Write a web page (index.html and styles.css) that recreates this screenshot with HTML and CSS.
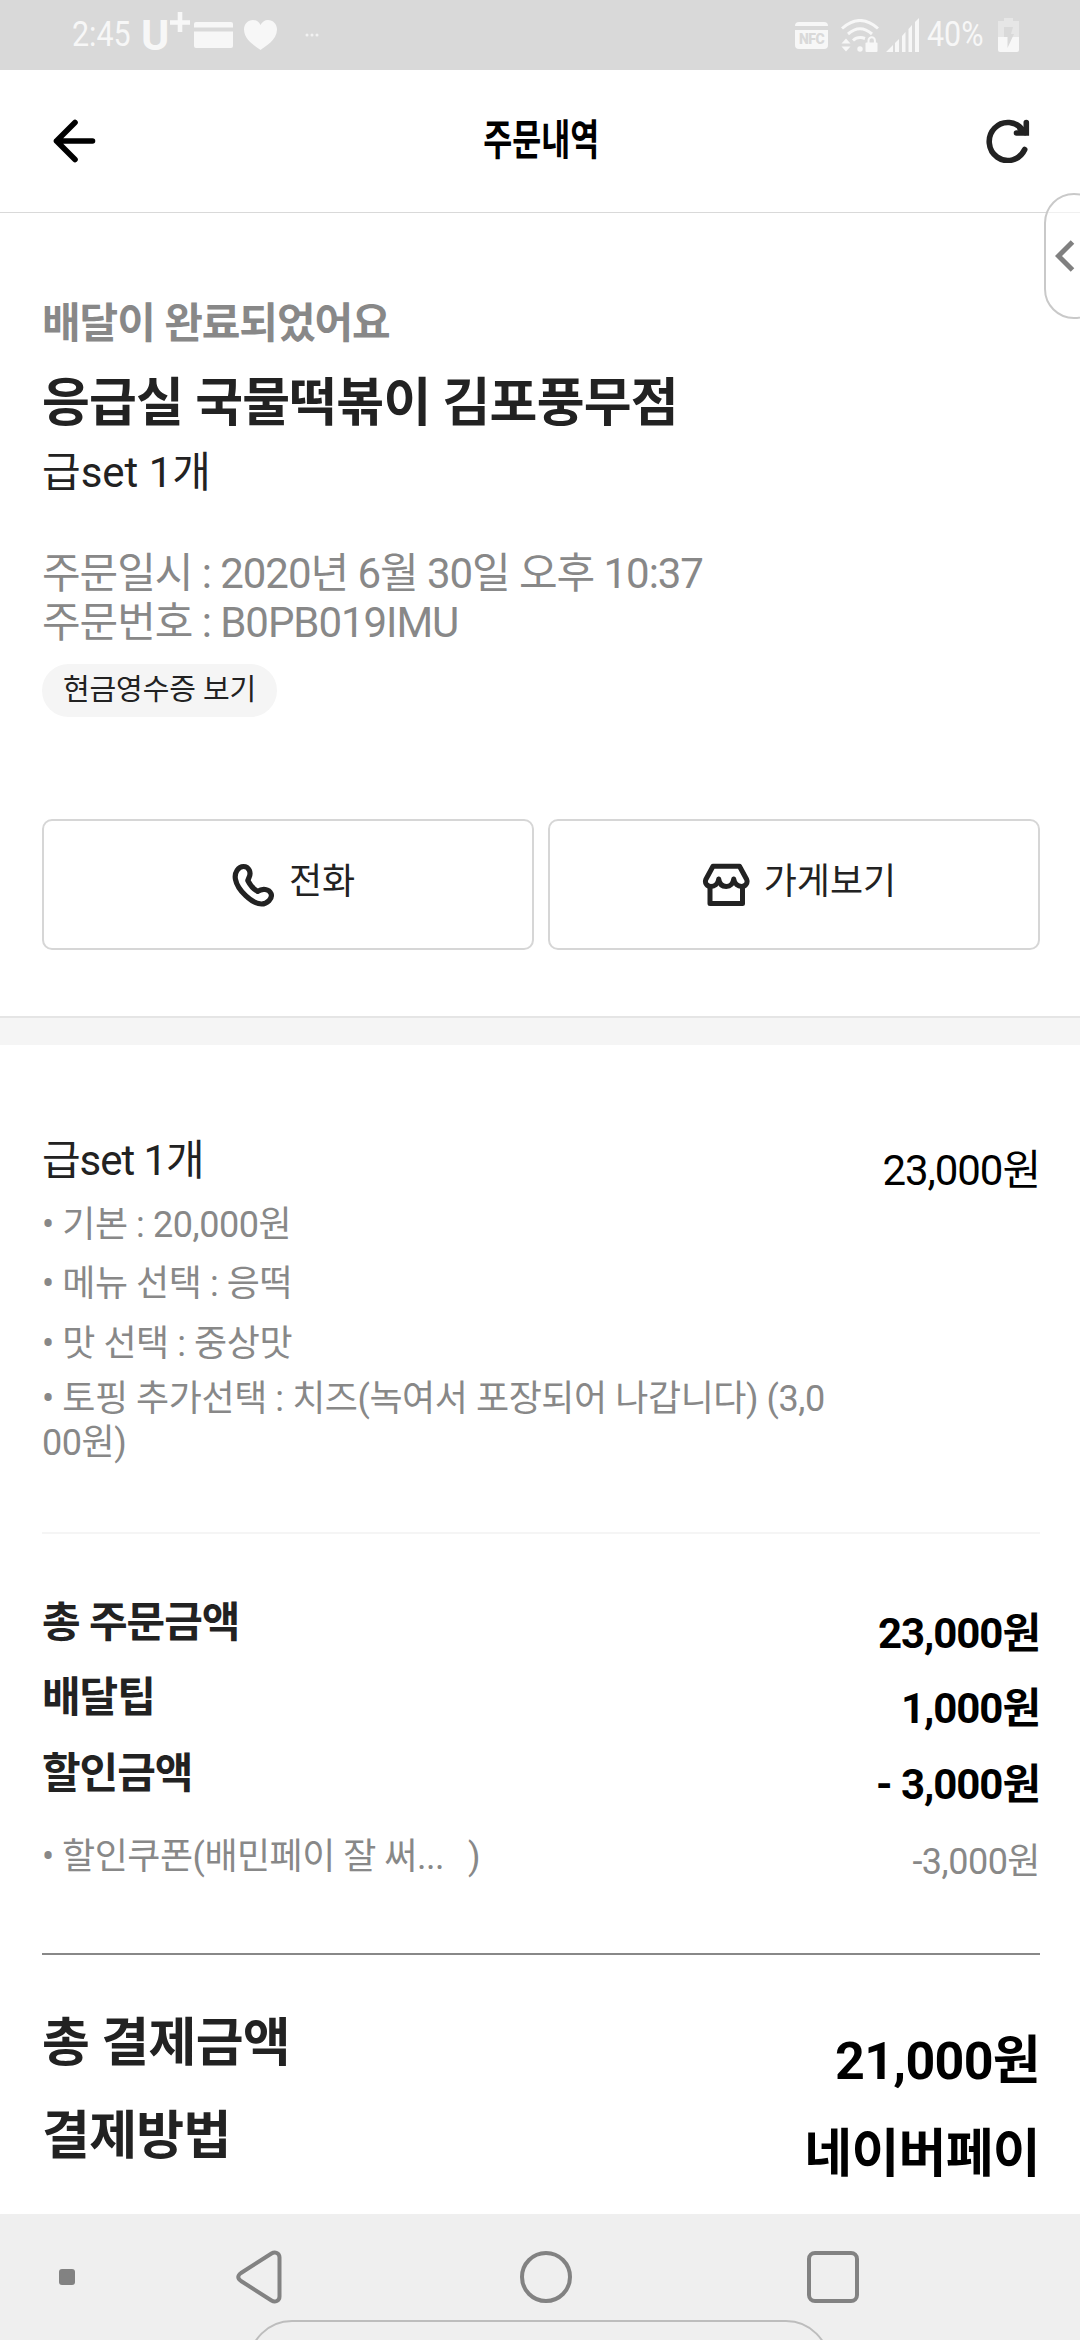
FILE: index.html
```
<!DOCTYPE html>
<html lang="ko">
<head>
<meta charset="utf-8">
<title>주문내역</title>
<link rel="stylesheet" href="styles.css">
</head>
<body>
<div class="screen">
  <div class="status">
    <div class="status-left">
      <span class="clock"><span class="narrow">2:45</span></span>
      <span class="carrier">U<svg class="plus" width="20" height="20" viewBox="0 0 20 20"><path d="M10 0v20M0 10.500h20" stroke="#f7f7f7" stroke-width="4.600"/></svg></span>
      <svg class="card" width="39" height="26" viewBox="0 0 39 26" fill="#f7f7f7"><path d="M0 5.500V2a2 2 0 0 1 2-2h35a2 2 0 0 1 2 2v3.500zM0 9.500h39V24a2 2 0 0 1-2 2H2a2 2 0 0 1-2-2z"/></svg>
      <svg class="heart" width="33" height="30" viewBox="0 0 33 30" fill="#f7f7f7"><path d="M16.500 30C12 26.500 0 20 0 9.500 0 4 4 0 9 0c3.500 0 6 2 7.500 5C18 2 20.500 0 24 0c5 0 9 4 9 9.500C33 20 21 26.500 16.500 30z"/></svg>
      <svg class="dots" width="14" height="4" viewBox="0 0 14 4" fill="#f2f2f2"><circle cx="2" cy="2" r="1.500"/><circle cx="7" cy="2" r="1.500"/><circle cx="12" cy="2" r="1.500"/></svg>
    </div>
    <div class="status-right">
      <div class="nfc">NFC</div>
      <svg class="wifi" width="38" height="33" viewBox="0 0 38 33">
        <g fill="none" stroke="#f7f7f7" stroke-width="3"><path d="M1 9.500Q19-6.500 37 9.500"/><path d="M7 15Q19 4.500 31 15"/><path d="M12 21.500Q17 17 24 19.500"/></g>
        <g fill="#f7f7f7"><circle cx="19" cy="30" r="2.700"/><path d="M.5 24.500 5 19.500l4.500 5zM.5 27.500h9L5 32.500z"/><rect x="24.500" y="23.500" width="12" height="9.500" rx="1"/></g>
        <path d="M27.500 24v-2.500a3.200 3.200 0 0 1 6.400 0V24" fill="none" stroke="#f7f7f7" stroke-width="2"/>
      </svg>
      <svg class="signal" width="33" height="34" viewBox="0 0 33 34" fill="#f7f7f7"><path d="M0 34l7-7v7zM9 25l4-4v13H9zM16 18l3.500-4v20H16zM22.500 11l3.500-4v27h-3.500zM29 4l4-4v34h-4z"/></svg>
      <span class="percent"><span class="narrow">40%</span></span>
      <svg class="battery" width="21" height="34" viewBox="0 0 21 34"><path d="M0 3h6V0h9v3h6v17H0z" fill="#e6e6e6"/><path d="M0 19h21v13a2 2 0 0 1-2 2H2a2 2 0 0 1-2-2z" fill="#f7f7f7"/><path d="M6 9h9l-2 7h3L9.500 30V19H6z" fill="#d9d9d9"/></svg>
    </div>
  </div>

  <header class="header">
    <svg width="43" height="44" viewBox="0 0 43 44" fill="none" stroke="#000" stroke-width="5.600" stroke-linecap="round" stroke-linejoin="round"><path d="M22 3.500 3.500 22 22 40.500M3.500 22H39.500"/></svg>
    <h1 class="header-title"><span>주문내역</span></h1>
    <svg width="44" height="44" viewBox="0 0 44 44" fill="none" stroke="#222" stroke-width="5.600" stroke-linecap="round"><path d="M38.700 30.500A18.600 19 0 1 1 37 11.500"/><path d="M40.300 3.500V14H30.500" stroke-linejoin="miter"/><path d="M34 9.500l5 4"/></svg>
  </header>

  <main>
    <section class="summary">
      <p class="state">배달이 완료되었어요</p>
      <h2 class="store">응급실 국물떡볶이 김포풍무점</h2>
      <p class="menu">급set 1개</p>
      <p class="meta">주문일시 : 2020년 6월 30일 오후 10:37<br>주문번호 : B0PB019IMU</p>
      <button class="receipt">현금영수증 보기</button>
      <div class="actions">
        <button class="action">
          <svg width="44" height="44" viewBox="0 0 44 44" fill="none" stroke="#222" stroke-width="5.200" stroke-linejoin="round"><path d="M4.500 16.500C3 9.500 7.500 3.500 12.500 3.500C18 3.500 20.500 9.500 18 14.500L16.800 17.500C19 22 22.500 26 26.700 28.400C31.500 25 38 26 40 30.500C42 35.500 36 41 30.500 41C21 41 6.500 27 4.500 16.500Z"/></svg>
          <span>전화</span>
        </button>
        <button class="action shop">
          <svg width="48" height="44" viewBox="0 0 48 44" fill="none" stroke="#222" stroke-width="5" stroke-linejoin="round"><path d="M11 3.200H37.500L44.700 16.500C46 20 43.500 23.500 39.700 23.500C36 23.500 32.600 21 31.700 16C31 21 28 23.500 24.200 23.500C20.500 23.500 17.500 21 16.700 16C16 21 12.500 23.500 8.800 23.500C5 23.500 2.500 20 3.800 16.500Z"/><path d="M8 23V40.500H40.500V23"/></svg>
          <span>가게보기</span>
        </button>
      </div>
    </section>

    <div class="band"></div>

    <section class="details">
      <div class="item">
        <div class="item-info">
          <h3 class="item-name">급set 1개</h3>
          <ul class="options">
            <li>• 기본 : 20,000원</li>
            <li>• 메뉴 선택 : 응떡</li>
            <li>• 맛 선택 : 중상맛</li>
            <li>• 토핑 추가선택 : 치즈(녹여서 포장되어 나갑니다) (3,000원)</li>
          </ul>
        </div>
        <span class="item-price">23,000원</span>
      </div>

      <dl class="amounts">
        <div class="row"><dt>총 주문금액</dt><dd>23,000원</dd></div>
        <div class="row"><dt>배달팁</dt><dd>1,000원</dd></div>
        <div class="row last"><dt>할인금액</dt><dd>- 3,000원</dd></div>
        <div class="row coupon"><dt>• 할인쿠폰(배민페이 잘 써...<span class="close">)</span></dt><dd>-3,000원</dd></div>
      </dl>

      <dl class="payment">
        <div class="row"><dt>총 결제금액</dt><dd>21,000원</dd></div>
        <div class="row"><dt>결제방법</dt><dd>네이버페이</dd></div>
      </dl>
    </section>
  </main>

  <nav class="nav">
    <i class="nav-dot"></i>
    <svg class="nav-back" width="46" height="54" viewBox="0 0 46 54" fill="none" stroke="#828282" stroke-width="4" stroke-linejoin="round"><path d="M35.500 3.500C39 1.300 43.500 3 43.500 7.500V46.500C43.500 51 39 52.700 35.500 50.500L5 31Q-.5 27 5 23Z"/></svg>
    <i class="nav-home"></i>
    <i class="nav-recent"></i>
    <div class="handle"></div>
  </nav>

  <div class="edge-tab"><svg width="20" height="32" viewBox="0 0 20 32" fill="none" stroke="#808080" stroke-width="5"><path d="M17.500 2 3.500 16l14 14"/></svg></div>
</div>
</body>
</html>
```
FILE: styles.css
```
* { box-sizing: border-box; margin: 0; padding: 0; }
body { background: #fff; font-family: Roboto, "Noto Sans CJK KR", sans-serif; color: #222; }
svg { display: block; flex: none; }
ul { list-style: none; }
button { font: inherit; color: inherit; background: none; border: 0; }

.screen { position: relative; width: 1080px; height: 2340px; overflow: hidden; display: flex; flex-direction: column; }

.status { height: 70px; flex: none; background: #d9d9d9; color: #f7f7f7; display: flex; justify-content: space-between; padding: 0 61px 0 72px; }
.status-left, .status-right { display: flex; align-items: center; }
.narrow { display: inline-block; transform: scaleX(.87); transform-origin: 0 50%; }
.clock { width: 69px; font-size: 35px; line-height: 72px; }
.carrier { display: flex; width: 50px; font-size: 43px; font-weight: 700; line-height: 72px; }
.plus { margin: 13px 0 0 1px; }
.card { margin-left: 3px; }
.heart { margin-left: 11px; }
.dots { margin-left: 28px; }
.nfc { width: 33px; height: 27px; border-radius: 4px; background: linear-gradient(#f7f7f7 4px, #d9d9d9 4px, #d9d9d9 8px, #f7f7f7 8px); color: #d9d9d9; font-size: 14px; font-weight: 900; line-height: 34px; text-align: center; letter-spacing: -.5px; }
.wifi { margin-left: 13px; }
.signal { margin-left: 7px; }
.percent { width: 79px; padding-left: 8px; font-size: 35px; line-height: 72px; }

.header { height: 143px; flex: none; border-bottom: 1px solid #d9d9d9; display: flex; align-items: center; justify-content: space-between; padding: 0 50px 0 53px; }
.header-title { padding-bottom: 8px; font-family: "Noto Sans CJK KR", sans-serif; font-size: 42px; font-weight: 700; line-height: 60px; color: #000; }
.header-title span { display: block; transform: scaleX(.75); }

main { flex: 1; min-height: 0; overflow: hidden; }
.summary { padding: 81px 40px 66px 42px; letter-spacing: -1.05px; font-size: 42px; }
.state { font-weight: 700; line-height: 60px; color: #888; }
.store { margin-top: 15px; font-size: 52px; line-height: 70px; letter-spacing: -.8px; }
.menu { margin-top: 4px; line-height: 60px; letter-spacing: 0; }
.meta { margin-top: 46px; line-height: 49px; color: #888; }
.receipt { display: block; margin-top: 17px; width: 235px; height: 53px; border-radius: 27px; background: #f5f5f5; font-size: 29px; line-height: 53px; letter-spacing: -.1px; }
.actions { display: grid; grid-template-columns: 1fr 1fr; gap: 14px; margin-top: 102px; }
.action { height: 131px; border: 2px solid #d6d6d6; border-radius: 10px; padding-left: 10px; display: flex; align-items: center; justify-content: center; gap: 14px; font-size: 36px; letter-spacing: 0; }
.action span { padding-bottom: 6px; line-height: 50px; }

.band { height: 29px; background: #f5f5f5; border-top: 2px solid #e5e5e5; }

.details { padding: 91px 40px 0 42px; letter-spacing: -1.05px; font-size: 42px; }
.item { display: flex; justify-content: space-between; align-items: flex-start; padding-bottom: 67px; border-bottom: 2px solid #f5f5f5; }
.item-info { width: 795px; }
.item-name { font-size: 42px; font-weight: 400; line-height: 50px; }
.options { margin-top: 17px; font-size: 36px; line-height: 44px; letter-spacing: -.43px; color: #888; word-break: break-all; }
.options li { margin-bottom: 15px; }
.options li:nth-child(2) { margin-bottom: 16px; }
.options li:nth-child(3) { margin-bottom: 11px; }
.options li:last-child { margin-bottom: 0; }
.item-price { padding-top: 5px; line-height: 60px; color: #000; }

.row { display: flex; justify-content: space-between; align-items: flex-start; font-weight: 700; }
.row dd { color: #000; }
.amounts { padding: 59px 0 69px; border-bottom: 2px solid #888; line-height: 60px; }
.amounts .row { margin-bottom: 4px; }
.amounts .row:nth-child(2) { margin-bottom: 5px; }
.amounts dd { padding-top: 11px; }
.amounts .last { margin-bottom: 20px; }
.amounts .coupon { margin-bottom: 0; font-size: 36px; font-weight: 400; line-height: 44px; letter-spacing: -.5px; color: #888; }
.coupon dd { padding-top: 5px; color: #888; }
.close { margin-left: 24px; }
.payment { padding-top: 54px; font-size: 52px; line-height: 70px; letter-spacing: -.7px; }
.payment .row { margin-bottom: 5px; }
.payment dd { padding-top: 18px; }

.nav { position: relative; height: 126px; flex: none; overflow: hidden; background: #efefef; display: flex; align-items: center; padding-left: 59px; }
.nav > * { flex: none; }
.nav-dot { width: 16px; height: 16px; border-radius: 3px; background: #828282; }
.nav-back { margin-left: 161px; }
.nav-home { margin-left: 238px; width: 52px; height: 52px; border: 4px solid #828282; border-radius: 50%; }
.nav-recent { margin-left: 235px; width: 52px; height: 52px; border: 4px solid #828282; border-radius: 8px; }
.handle { position: absolute; left: 248px; top: 106px; width: 582px; height: 100px; border: 2px solid #bdbdbd; border-radius: 44px; }

.edge-tab { position: absolute; left: 1044px; top: 193px; width: 60px; height: 126px; border: 2px solid #c9c9c9; border-radius: 38px; background: rgba(255, 255, 255, .6); padding: 45px 0 0 9px; }
```
